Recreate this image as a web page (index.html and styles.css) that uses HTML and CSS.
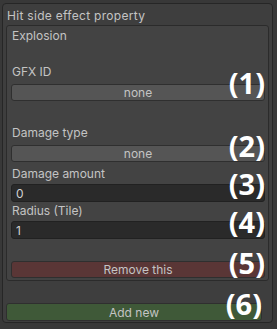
FILE: index.html
```html
<!DOCTYPE html>
<html lang="en">
<head>
    <meta charset="UTF-8" />
    <title>Hit side effect property</title>
    <link rel="stylesheet" href="styles.css">
</head>
<body>
  <div class="panel">
    <div class="panel-title">Hit side effect property</div>

    <!-- one effect entry -->
    <div class="box">
      <div class="box-title">Explosion</div>

      <div class="label gfx-label">GFX ID</div>
      <button class="popup">none</button>

      <div class="label type-label">Damage type</div>
      <button class="popup">none</button>

      <div class="label amount-label">Damage amount</div>
      <input class="field" type="text" value="0" />

      <div class="label radius-label">Radius (Tile)</div>
      <input class="field" type="text" value="1" />

      <button class="btn-remove">Remove this</button>
    </div>

    <button class="btn-add">Add new</button>
  </div>

  <!-- callout numbers drawn over the inspector -->
  <span class="note note-1">(1)</span>
  <span class="note note-2">(2)</span>
  <span class="note note-3">(3)</span>
  <span class="note note-4">(4)</span>
  <span class="note note-5">(5)</span>
  <span class="note note-6">(6)</span>
</body>
</html>
```

FILE: styles.css
```css
body {
    margin: 0;
    height: 329px;
    background: #383838;
    font-family: Inter, "Noto Sans", sans-serif;
    font-size: 12px;
    line-height: 16px;
    color: #c4c4c4;
    position: relative;
    overflow: hidden;
}

.panel {
    margin: 3px 4px 0 2px;
    padding: 4px 0 1px 0;
    border: 1px solid #262626;
    border-radius: 4px;
    background: #3e3e3e;
}

.panel-title {
    padding-left: 4px;
    letter-spacing: 0.3px;
}

.box {
    margin: 1px 3px 0 3px;
    padding: 2px 3px 2px 4px;
    border: 1px solid #2b2b2b;
    border-radius: 3px;
    background: #434343;
    display: flex;
    flex-direction: column;
}

.box-title {
    padding-left: 1px;
}

.label {
    padding-left: 1px;
}

.gfx-label { margin-top: 20px; }
.type-label { margin-top: 24px; }
.amount-label { margin-top: 4px; }
.radius-label { margin-top: 1px; }

button {
    font-family: inherit;
    font-size: 12px;
    color: #c4c4c4;
    box-sizing: border-box;
    border-radius: 3px;
    padding: 0;
    margin: 0;
    line-height: 15px;
}

.popup {
    height: 17px;
    margin-top: 4px;
    background: #555555;
    border: 1px solid #2f2f2f;
}

.field {
    box-sizing: border-box;
    height: 18px;
    margin-top: 2px;
    padding: 0 4px;
    font-family: inherit;
    font-size: 12px;
    color: #d2d2d2;
    background: #2a2a2a;
    border: 1px solid #212121;
    border-radius: 3px;
    outline: none;
}

.btn-remove {
    height: 17px;
    margin-top: 22px;
    background: #5a3636;
    border: 1px solid #2f2f2f;
}

.btn-add {
    display: block;
    width: 256px;
    height: 18px;
    margin: 22px 0 0 3px;
    background: #3f5938;
    border: 1px solid #2f2f2f;
}

.note {
    position: absolute;
    right: 12px;
    font-family: "Open Sans", sans-serif;
    font-weight: 700;
    font-size: 29px;
    line-height: 32px;
    color: #ffffff;
}

.note-1 { top: 67px; }
.note-2 { top: 130px; }
.note-3 { top: 168px; }
.note-4 { top: 206px; }
.note-5 { top: 247px; }
.note-6 { top: 288px; right: 15px; }
```
